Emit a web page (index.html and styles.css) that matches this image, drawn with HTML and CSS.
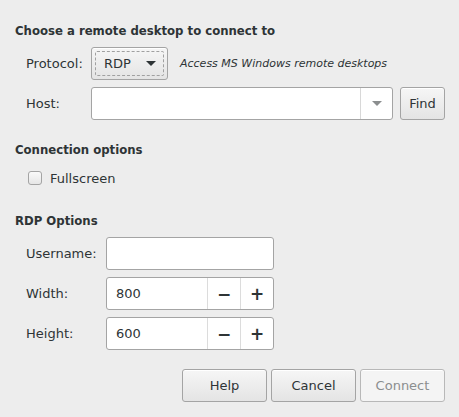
FILE: index.html
```html
<!DOCTYPE html>
<html>
<head>
<meta charset="utf-8">
<link rel="stylesheet" href="styles.css">
</head>
<body>
<div class="dialog">
  <div class="heading h1">Choose a remote desktop to connect to</div>
  <div class="grid g1">
    <div class="label">Protocol:</div>
    <div class="row">
      <div class="btn proto"><span class="focus"><span>RDP</span><span class="arrow dark"></span></span></div>
      <div class="hint">Access MS Windows remote desktops</div>
    </div>
    <div class="label">Host:</div>
    <div class="row">
      <div class="combo"><div class="combo-entry"></div><div class="combo-btn"><span class="arrow light"></span></div></div>
      <div class="btn find">Find</div>
    </div>
  </div>

  <div class="heading h2">Connection options</div>
  <div class="check-row">
    <span class="checkbox"></span><span class="check-label">Fullscreen</span>
  </div>

  <div class="heading h3">RDP Options</div>
  <div class="grid g2">
    <div class="label">Username:</div>
    <div class="entry"></div>
    <div class="label">Width:</div>
    <div class="spin"><div class="spin-val">800</div><div class="spin-btn">&minus;</div><div class="spin-btn">+</div></div>
    <div class="label">Height:</div>
    <div class="spin"><div class="spin-val">600</div><div class="spin-btn">&minus;</div><div class="spin-btn">+</div></div>
  </div>

  <div class="actions">
    <div class="btn action">Help</div>
    <div class="btn action">Cancel</div>
    <div class="btn action disabled">Connect</div>
  </div>
</div>
</body>
</html>
```

FILE: styles.css
```css
html, body {
  margin: 0;
  padding: 0;
  background: #ededed;
}
body {
  font-family: "DejaVu Sans", sans-serif;
  font-size: 13px;
  color: #2e3436;
  width: 459px;
  height: 417px;
  overflow: hidden;
}
.dialog {
  padding: 23px 14px 0 15px;
}
.heading {
  font-family: "DejaVu Sans Condensed", "DejaVu Sans", sans-serif;
  font-weight: bold;
  line-height: 16px;
  height: 16px;
}
.h2 { margin-top: 22px; }
.h3 { margin-top: 27px; }
.grid {
  display: grid;
  row-gap: 7px;
  align-items: center;
  padding-left: 11px;
}
.g1 {
  margin-top: 8px;
  grid-template-columns: 65px auto;
}
.g2 {
  margin-top: 8px;
  grid-template-columns: 80px 168px;
}
.label {
  line-height: 16px;
}
.row {
  display: flex;
  align-items: center;
}
.btn {
  box-sizing: border-box;
  height: 33px;
  border: 1px solid #a4a4a4;
  border-radius: 3px;
  background: linear-gradient(#f6f6f6, #e4e4e4);
  display: flex;
  align-items: center;
  justify-content: center;
  box-shadow: inset 0 1px #fff;
}
.proto {
  width: 77px;
  padding: 3px;
}
.focus {
  flex: 1;
  align-self: stretch;
  display: flex;
  align-items: center;
  justify-content: space-between;
  border: 1px dashed #a0a0a0;
  border-radius: 2px;
  padding: 0 7px 0 8px;
}
.arrow {
  width: 0;
  height: 0;
  border-left: 5px solid transparent;
  border-right: 5px solid transparent;
  border-top: 5px solid #2e3436;
}
.arrow.light { border-top-color: #8b8e8f; }
.hint {
  margin-left: 12px;
  font-style: italic;
  font-size: 11px;
}
.combo {
  box-sizing: border-box;
  width: 302px;
  height: 33px;
  border: 1px solid #a4a4a4;
  border-radius: 3px;
  background: #fff;
  display: flex;
}
.combo-entry { flex: 1; }
.combo-btn {
  width: 31px;
  border-left: 1px solid #d8d8d8;
  display: flex;
  align-items: center;
  justify-content: center;
}
.find {
  width: 45px;
  margin-left: 7px;
}
.check-row {
  margin-top: 12px;
  display: flex;
  align-items: center;
  padding-left: 13px;
  height: 16px;
}
.checkbox {
  box-sizing: border-box;
  width: 14px;
  height: 14px;
  border: 1px solid #a4a4a4;
  border-radius: 3px;
  background: linear-gradient(#fafafa, #e6e6e6);
}
.check-label {
  margin-left: 8px;
}
.entry, .spin {
  box-sizing: border-box;
  height: 33px;
  border: 1px solid #a4a4a4;
  border-radius: 3px;
  background: #fff;
}
.spin {
  display: flex;
}
.spin-val {
  flex: 1;
  display: flex;
  align-items: center;
  padding-left: 9px;
}
.spin-btn {
  width: 32px;
  border-left: 1px solid #dcdcdc;
  display: flex;
  align-items: center;
  justify-content: center;
  font-size: 17px;
  font-weight: bold;
}
.actions {
  margin-top: 19px;
  display: flex;
  justify-content: flex-end;
  gap: 4px;
}
.action {
  width: 85px;
}
.disabled {
  color: #8b8e8f;
  background: #f4f4f4;
  border-color: #b8b8b8;
}
```
